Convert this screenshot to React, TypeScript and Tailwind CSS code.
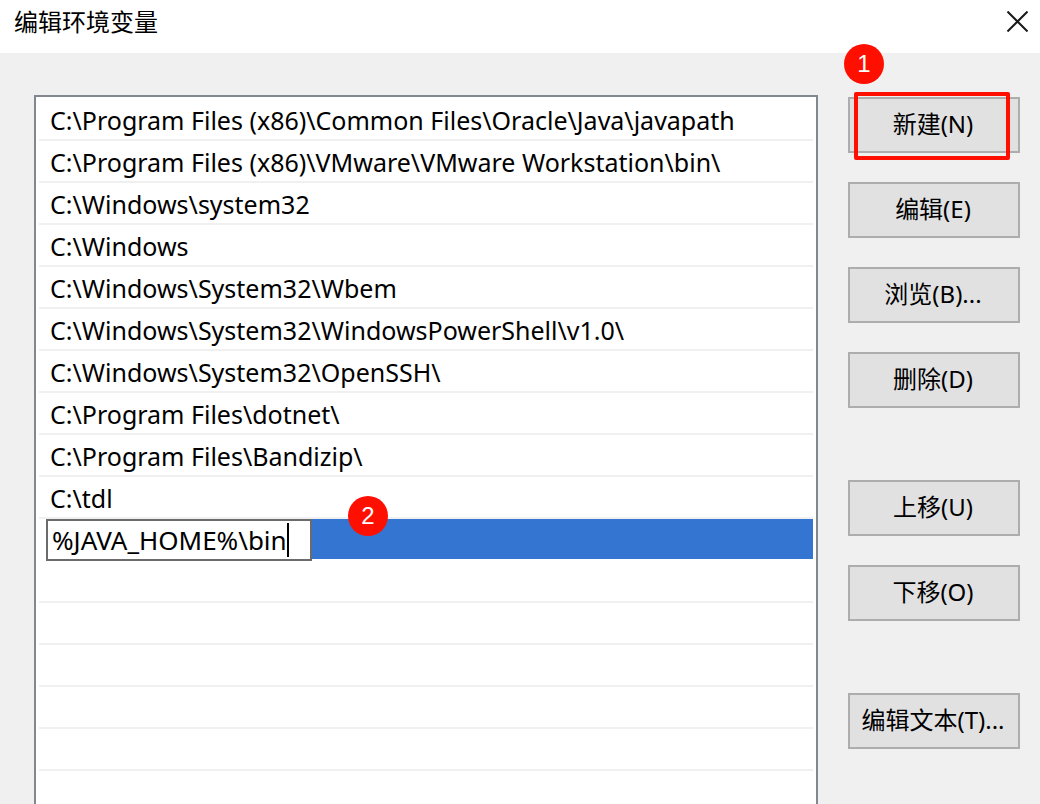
import React, { useState } from 'react';

const paths = [
  'C:\\Program Files (x86)\\Common Files\\Oracle\\Java\\javapath',
  'C:\\Program Files (x86)\\VMware\\VMware Workstation\\bin\\',
  'C:\\Windows\\system32',
  'C:\\Windows',
  'C:\\Windows\\System32\\Wbem',
  'C:\\Windows\\System32\\WindowsPowerShell\\v1.0\\',
  'C:\\Windows\\System32\\OpenSSH\\',
  'C:\\Program Files\\dotnet\\',
  'C:\\Program Files\\Bandizip\\',
  'C:\\tdl',
];

const emptyRows = 6;

interface StepBadgeProps {
  step: number;
  className: string;
}

const StepBadge: React.FC<StepBadgeProps> = ({ step, className }) => (
  <span
    className={`absolute z-10 flex size-10 items-center justify-center rounded-full bg-[#ff0f00] font-['Liberation_Sans',sans-serif] text-2xl text-white ${className}`}
  >
    {step}
  </span>
);

const DialogButton: React.FC<{ children: React.ReactNode }> = ({ children }) => (
  <button
    type="button"
    className="h-14 w-full border-2 border-[#adadad] bg-[#e1e1e1] pr-0.5 pb-0.5 whitespace-nowrap hover:bg-[#e5f1fb]"
  >
    {children}
  </button>
);

export default function App() {
  const [value, setValue] = useState('%JAVA_HOME%\\bin');

  return (
    <div className="flex h-screen flex-col overflow-hidden bg-[#f0f0f0] font-['Noto_Sans','Noto_Sans_CJK_SC',sans-serif] text-2xl text-black">
      <header className="flex h-[53px] shrink-0 items-center justify-between bg-white pr-3 pb-2.5 pl-3.5">
        <h1>编辑环境变量</h1>
        <button type="button" aria-label="关闭">
          <svg width="21" height="21" viewBox="0 0 21 21" fill="none" stroke="#1a1a1a" strokeWidth="2">
            <path d="M0.5 0.5L20.5 20.5M20.5 0.5L0.5 20.5" />
          </svg>
        </button>
      </header>

      <main className="flex min-h-0 flex-1 gap-[30px] pt-[42px] pr-5 pl-[34px]">
        <ul className="min-w-0 flex-1 border-2 border-b-0 border-[#828790] bg-white px-[3px] pt-0.5 text-[25px]">
          {paths.map((path) => (
            <li key={path} className="flex h-[42px] items-center border-b-2 border-[#f0f0f0] pt-1 pl-[11px] whitespace-nowrap">
              {path}
            </li>
          ))}
          <li className="relative flex h-[42px] pl-[7px]">
            <label className="flex w-[266px] items-center border-2 border-[#6b6b6b] bg-white pl-1">
              <input
                aria-label="环境变量"
                value={value}
                onChange={(e) => setValue(e.target.value)}
                className="min-w-0 field-sizing-content text-[26px] caret-transparent outline-none"
              />
              <span className="h-[34px] w-0.5 shrink-0 bg-black" />
            </label>
            <div className="mb-0.5 flex-1 bg-[#3375d0]" />
            <StepBadge step={2} className="-top-[23px] left-[309px]" />
          </li>
          {Array.from({ length: emptyRows }, (_, i) => (
            <li key={i} className="h-[42px] border-b-2 border-[#f0f0f0]" />
          ))}
        </ul>

        <div className="flex w-[172px] shrink-0 flex-col gap-[72px] pt-0.5">
          <div className="flex flex-col gap-[29px]">
            <div className="relative">
              <DialogButton>新建(N)</DialogButton>
              <div className="pointer-events-none absolute -top-[5px] right-2.5 -bottom-[7px] left-1.5 rounded-xs border-4 border-[#ff0f00]" />
              <StepBadge step={1} className="-top-[53px] -left-1" />
            </div>
            <DialogButton>编辑(E)</DialogButton>
            <DialogButton>浏览(B)...</DialogButton>
            <DialogButton>删除(D)</DialogButton>
          </div>
          <div className="flex flex-col gap-[29px]">
            <DialogButton>上移(U)</DialogButton>
            <DialogButton>下移(O)</DialogButton>
          </div>
          <DialogButton>编辑文本(T)...</DialogButton>
        </div>
      </main>
    </div>
  );
}
